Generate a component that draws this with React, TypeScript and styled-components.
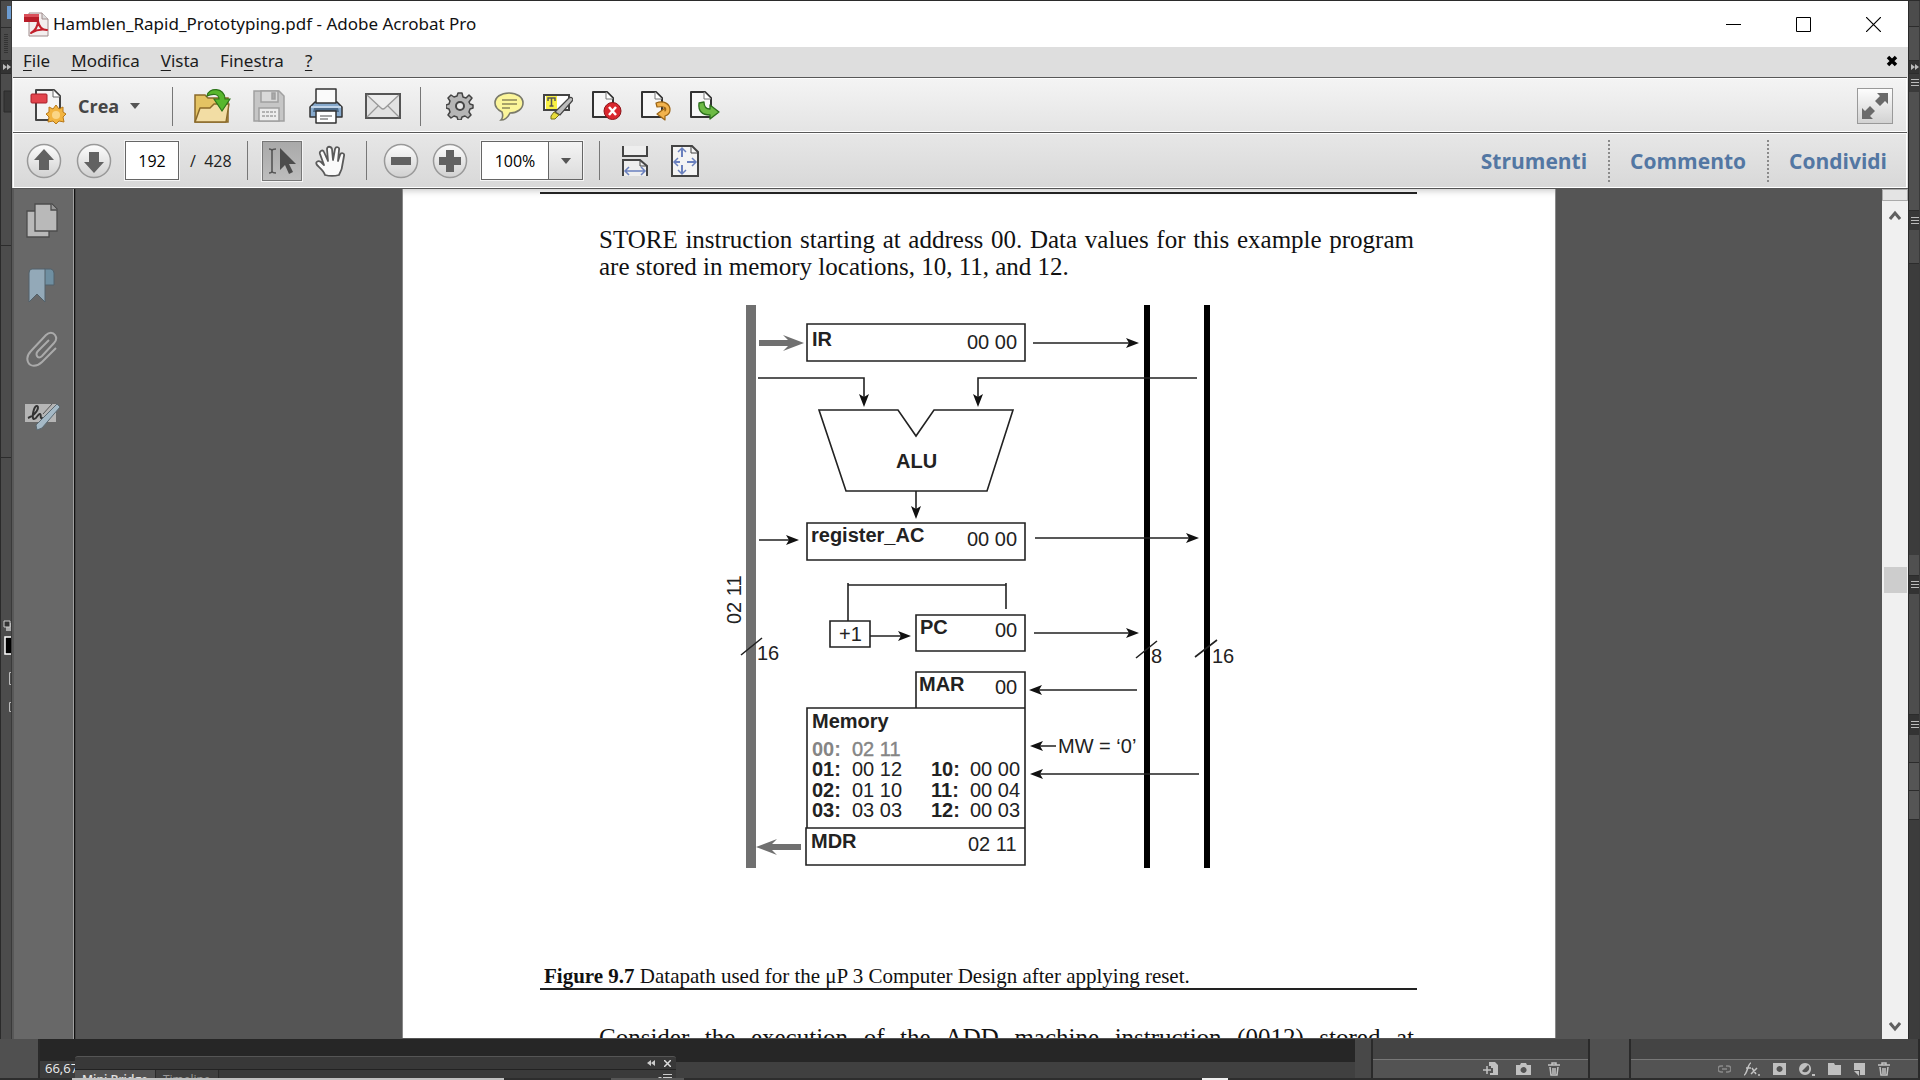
import React from "react";
import styled, { createGlobalStyle, css } from "styled-components";

const uiFont = `"Open Sans", "Noto Sans", sans-serif`;
const menuFont = `"Noto Sans", "Open Sans", sans-serif`;

const GlobalStyle = createGlobalStyle`
  * { box-sizing: border-box; }
  body { margin: 0; overflow: hidden; background: #434343; font-family: ${uiFont}; }
  button, input { font: inherit; color: inherit; }
  svg { display: block; flex: none; }
`;

/* ---------- shell ---------- */

const Desktop = styled.div`
  height: 100vh;
  display: flex;
  flex-direction: column;
  background: #3f3f3f;
`;

const Stage = styled.div`
  flex: 1;
  min-height: 0;
  display: flex;
  padding-top: 1px;
  background: #2b2b2b;
`;

const AppWindow = styled.main`
  flex: 1;
  min-width: 0;
  display: flex;
  flex-direction: column;
  background: #dedede;
`;

const Bar = styled.div`
  display: flex;
  align-items: center;
  flex: none;
`;

const TitleBar = styled(Bar)`
  height: 46px;
  padding-left: 12px;
  background: #fff;
`;

const Title = styled.h1`
  flex: 1;
  margin: 0 0 0 4px;
  font-family: ${menuFont};
  font-size: 17px;
  line-height: 24px;
  font-weight: 400;
  color: #111;
`;

const CaptionButton = styled.button`
  width: 70px;
  height: 46px;
  display: grid;
  place-items: center;
  padding: 0;
  border: 0;
  background: none;
`;

const MenuBar = styled(Bar)`
  height: 30px;
  padding: 0 8px 3px 0;
  justify-content: space-between;
  background: #dedede;
`;

const MenuList = styled.nav`
  display: flex;
`;

const MenuItem = styled.button`
  padding: 0 10px 0 11px;
  border: 0;
  background: none;
  font-family: ${menuFont};
  font-size: 17px;
  line-height: 26px;
  color: #1c1c1c;
  u { text-underline-offset: 3px; }
`;

const CloseDoc = styled.button`
  padding: 0;
  width: 16px;
  height: 16px;
  border: 0;
  background: none;
`;

const Toolbar = styled(Bar)<{ $lower?: boolean }>`
  height: ${(p) => (p.$lower ? 56 : 55)}px;
  margin: 0 1px;
  padding-top: ${(p) => (p.$lower ? 0 : 2)}px;
  border-top: 1px solid #585858;
  box-shadow: inset 0 1px 0 #fff, inset 1px 0 0 #fff, inset -1px 0 0 #fff, inset 0 -1px 0 #fff;
  background: ${(p) => (p.$lower ? "linear-gradient(#e7e7e7, #d8d8d8)" : "linear-gradient(#f4f4f4, #e4e4e4)")};
`;

const Spacer = styled.div`
  flex: 1;
`;

const Divider = styled.span<{ $before: number; $after: number }>`
  width: 1px;
  height: 39px;
  margin: 0 ${(p) => p.$after}px 0 ${(p) => p.$before}px;
  background: #777;
`;

const ToolButton = styled.button<{ $w: number; $pressed?: boolean }>`
  width: ${(p) => p.$w}px;
  height: 40px;
  padding: 0;
  display: grid;
  place-items: center;
  border: 0;
  background: none;
  ${(p) =>
    p.$pressed &&
    css`
      border: 1px solid #777;
      background: linear-gradient(#a9a9a9, #bdbdbd);
      box-shadow: 0 0 0 1px #f4f4f4;
    `}
`;

const CreateButton = styled.button`
  width: 159px;
  height: 46px;
  display: flex;
  align-items: center;
  padding: 0 0 0 17px;
  border: 0;
  background: none;
  font-size: 18px;
  font-weight: 700;
  color: #454545;
  span { margin: 0 10px 0 12px; }
`;

const PageInput = styled.input`
  width: 54px;
  height: 39px;
  margin-left: 11px;
  padding: 0;
  border: 1px solid #666;
  box-shadow: 0 0 0 1px #f4f4f4;
  background: #fff;
  text-align: center;
  font-size: 16px;
`;

const PageTotal = styled.label`
  width: 68px;
  padding-left: 11px;
  font-size: 16px;
  white-space: pre;
  color: #222;
`;

const ZoomBox = styled.div`
  display: flex;
  width: 102px;
  height: 39px;
  margin-left: 7px;
  border: 1px solid #666;
  box-shadow: 0 0 0 1px #f4f4f4;
  background: #fff;
`;

const ZoomInput = styled.input`
  flex: 1;
  min-width: 0;
  padding: 0;
  border: 0;
  background: none;
  text-align: center;
  font-size: 16px;
`;

const ZoomDrop = styled.button`
  width: 34px;
  display: grid;
  place-items: center;
  padding: 0;
  border: 0;
  border-left: 1px solid #666;
  background: linear-gradient(#f4f4f4, #dcdcdc);
`;

const PaneLink = styled.a`
  height: 42px;
  padding: 0 21px 0 20px;
  display: flex;
  align-items: center;
  border-left: 2px dotted #8a8a8a;
  font-size: 21px;
  font-weight: 700;
  color: #5377a3;
  text-decoration: none;
  &:first-of-type { border-left: 0; }
  &:last-of-type { padding-right: 20px; }
`;

const FullButton = styled.button`
  width: 36px;
  height: 36px;
  margin-right: 14px;
  padding: 0;
  display: grid;
  place-items: center;
  border: 1px solid #999;
  background: linear-gradient(#fdfdfd, #d2d2d2);
`;

/* ---------- workspace ---------- */

const Workspace = styled.div`
  flex: 1;
  min-height: 0;
  display: flex;
  border-top: 1px solid #555;
  background: #555;
`;

const NavPanel = styled.aside`
  width: 63px;
  display: flex;
  flex-direction: column;
  align-items: center;
  gap: 25px;
  padding: 12px 4px 0 0;
  background: #686868;
  border-left: 2px solid #585858;
  border-right: 1px solid #111;
  box-shadow: inset -1px 0 0 #a0a0a0;
`;

const Canvas = styled.section`
  flex: 1;
  min-width: 0;
  display: flex;
  justify-content: center;
  overflow: hidden;
  padding-bottom: 1px;
  border-left: 1px solid #444;
`;

const Page = styled.article`
  width: 1154px;
  flex: none;
  padding: 3px 138px 0 137px;
  overflow: hidden;
  background: #fff;
  border: solid #888;
  border-width: 0 1px;
  box-shadow: inset 0 8px 6px -6px #ccc;
  color: #111;
  font-family: "Liberation Serif", serif;
`;

const Rule = styled.hr`
  height: 2px;
  margin: 0;
  border: 0;
  background: #222;
`;

const Paragraph = styled.p<{ $top: number }>`
  margin: ${(p) => p.$top}px 3px 0 59px;
  font-size: 25px;
  line-height: 27px;
`;

const Line = styled.span<{ $full?: boolean }>`
  display: block;
  white-space: nowrap;
  ${(p) => p.$full && "text-align: justify; text-align-last: justify;"}
`;

const Figure = styled.figure`
  margin: 24px 0 0;
  svg { margin-left: 180px; }
`;

const Caption = styled.figcaption`
  margin: 93px 0 0 4px;
  font-size: 21px;
  line-height: 24px;
`;

const ScrollTrack = styled.div`
  width: 26px;
  display: flex;
  flex-direction: column;
  align-items: center;
  background: #f0f0f0;
`;

const SplitHandle = styled.div`
  width: 26px;
  height: 12px;
  border: 1px solid #aaa;
  background: #e4e4e4;
`;

const ScrollButton = styled.button`
  width: 24px;
  height: 26px;
  display: grid;
  place-items: center;
  padding: 2px 0 0;
  border: 0;
  background: none;
`;

const Gap = styled.div<{ $grow: number }>`
  flex: ${(p) => p.$grow};
`;

const Thumb = styled.div`
  width: 23px;
  height: 26px;
  background: #cdcdcd;
`;

/* ---------- editor behind the window ---------- */

const SideStrip = styled.div`
  width: 12px;
  flex: none;
  display: flex;
  flex-direction: column;
  overflow: hidden;
  background: #4c4c4c;
  border-left: 1px solid #2a2a2a;
  border-right: 1px solid #3a3a3a;
`;

const Block = styled.div<{ $h?: number; $bg?: string; $edge?: boolean }>`
  flex: ${(p) => (p.$h ? `none` : `1`)};
  height: ${(p) => (p.$h ? `${p.$h}px` : "auto")};
  display: flex;
  align-items: center;
  justify-content: flex-end;
  background: ${(p) => p.$bg ?? "transparent"};
  ${(p) => p.$edge && "border-bottom: 1px solid #2c2c2c;"}
`;

const BottomStrip = styled.footer`
  height: 41px;
  flex: none;
  display: flex;
  flex-direction: column;
  background: #3f3f3f;
`;

const Docks = styled.div`
  flex: 1;
  min-height: 0;
  display: flex;
`;

const Dock = styled.div<{ $w?: number; $bg: string }>`
  ${(p) => (p.$w ? `width: ${p.$w}px; flex: none;` : "flex: 1;")}
  background: ${(p) => p.$bg};
  border-right: 2px solid #2a2a2a;
`;

const ZoomStatus = styled.div`
  width: 35px;
  flex: none;
  overflow: hidden;
  padding: 20px 0 0 5px;
  background: linear-gradient(#262626 22px, #3c3c3c 22px);
  font-size: 13px;
  line-height: 19px;
  color: #eee;
`;

const MiniPanel = styled.div`
  width: 601px;
  flex: none;
  padding-top: 17px;
  background: #262626;
`;

const MiniHead = styled.div`
  height: 13px;
  display: flex;
  align-items: center;
  justify-content: flex-end;
  padding-right: 5px;
  gap: 9px;
  border-top: 1px solid #555;
  border-radius: 3px 3px 0 0;
  background: #383838;
`;

const MiniTabs = styled.div`
  height: 9px;
  display: flex;
  overflow: hidden;
  border-top: 1px solid #222;
  background: #3a3a3a;
`;

const MiniTab = styled.button<{ $on?: boolean }>`
  height: 18px;
  padding: 1px 7px 0;
  border: 0;
  border-right: 1px solid #2a2a2a;
  background: ${(p) => (p.$on ? "#535353" : "#404040")};
  color: ${(p) => (p.$on ? "#e0e0e0" : "#999")};
  font-size: 12px;
  line-height: 14px;
  font-weight: ${(p) => (p.$on ? 600 : 400)};
`;

const Stub = styled.div`
  flex: 1;
  background: linear-gradient(#262626 23px, #404040 23px);
`;

const IconDock = styled.div<{ $w: number; $gap: number }>`
  width: ${(p) => p.$w}px;
  flex: none;
  display: flex;
  align-items: flex-end;
  justify-content: flex-end;
  gap: ${(p) => p.$gap}px;
  padding: 0 28px 2px 0;
  border-right: 2px solid #2a2a2a;
  background: linear-gradient(#444 20px, #777 20px, #777 21px, #535353 21px);
`;

const Taskbar = styled.div`
  height: 2px;
  display: flex;
  background: #2d2d2d;
`;

const TaskItem = styled.span<{ $w: number; $bg: string; $before: number }>`
  width: ${(p) => p.$w}px;
  margin-left: ${(p) => p.$before}px;
  background: ${(p) => p.$bg};
`;

/* ---------- icons ---------- */

const PdfIcon = () => (
  <svg width="25" height="25" viewBox="0 0 25 25">
    <path d="M5 1h13l6 6v17H5z" fill="#f3eeee" stroke="#a08c8c" />
    <path d="M18 1v6h6" fill="#ddd" stroke="#a08c8c" />
    <path d="M7 21c4-2 7-7 7-12 1 6 4 9 9 9-5-1-11 0-16 3z" fill="none" stroke="#c2202c" strokeWidth="2" strokeLinejoin="round" />
    <path d="M0 2h15v8H0z" fill="#b81c28" />
    <path d="M0 2h15v3H0z" fill="#d9505a" />
  </svg>
);

const CreateIcon = () => (
  <svg width="36" height="36" viewBox="0 0 36 36">
    <path d="M6 2h18l6 6v24H6z" fill="#f4f4f4" stroke="#444" strokeWidth="2" strokeLinejoin="round" />
    <path d="M23 2v7h7" fill="#fff" stroke="#666" />
    <rect x="1" y="6" width="16" height="9" rx="1" fill="#e2444c" stroke="#a81f29" />
    <path d="M26 17l3 4 4-2v5l3 2-3 3 1 5-5-1-3 3-3-3-5 1 1-5-3-3 3-2v-5l4 2z" fill="#f2b440" stroke="#b87818" />
    <circle cx="26" cy="27" r="4" fill="#fbd685" />
  </svg>
);

const Caret = () => (
  <svg width="12" height="8" viewBox="0 0 12 8"><path d="M1 1h10L6 7z" fill="#555" /></svg>
);

const OpenIcon = () => (
  <svg width="38" height="36" viewBox="0 0 38 36">
    <path d="M2 34V7h10l3 3h20v24z" fill="#e4c363" stroke="#8a6a2a" strokeWidth="1.5" />
    <path d="M2 34l5-14h10l4-4h15l-3 18z" fill="#f2dda4" stroke="#8a6a2a" strokeWidth="1.5" strokeLinejoin="round" />
    <path d="M14 8C15-1 32-1 32 11h5l-8 12-8-12h5c0-5-6-6-12-3z" fill="#58b72d" stroke="#2d741a" strokeWidth="1.2" />
  </svg>
);

const SaveIcon = () => (
  <svg width="32" height="32" viewBox="0 0 32 32" fill="#c6c6c6" stroke="#a0a0a0" strokeWidth="1.5">
    <path d="M1 1h25l5 5v25H1z" />
    <path d="M8 1h17v11H8z" fill="#d9d9d9" />
    <path d="M19 3h3v6h-3z" fill="#aaa" />
    <path d="M6 18h20v13H6z" fill="#ececec" />
    <path d="M9 22h14M9 26h14" strokeDasharray="3 1" />
  </svg>
);

const PrintIcon = () => (
  <svg width="34" height="36" viewBox="0 0 34 36" stroke="#333" strokeWidth="1.5" strokeLinejoin="round">
    <path d="M1 19l5-5h22l5 5v10H1z" fill="#86a9cc" />
    <path d="M2 19h30" stroke="#d5e5f4" />
    <path d="M7 1h20v14H7z" fill="#fafafa" />
    <path d="M5 20h24l1 4H4z" fill="#4c6a88" stroke="none" />
    <path d="M7 23h20v12H7z" fill="#fff" />
    <path d="M11 28h12M11 31h8" stroke="#888" />
  </svg>
);

const MailIcon = () => (
  <svg width="36" height="26" viewBox="0 0 36 26" fill="none" stroke="#999" strokeWidth="1.3">
    <rect x="1" y="1" width="34" height="24" fill="#e2e2e2" stroke="#555" strokeWidth="2" />
    <path d="M2 24l12-12M34 24L22 12" />
    <path d="M2 2l14 13q2 2 4 0L34 2" fill="#ededed" />
  </svg>
);

const GearIcon = () => (
  <svg width="28" height="28" viewBox="0 0 28 28">
    <g fill="#b5b5b5" stroke="#444" strokeWidth="1.5">
      <path d="M12 1h4l1 4 3 1 3-3 3 3-3 4 1 2 3 1v3l-3 1-1 3 2 3-3 3-3-2-3 1-1 3h-3l-1-3-3-1-3 2-3-3 2-3-1-3-3-1v-3l3-1 1-3-2-3 3-3 3 2 3-1z" strokeLinejoin="round" />
      <circle cx="14" cy="14" r="4" fill="#e8e8e8" strokeWidth="2" />
    </g>
  </svg>
);

const CommentIcon = () => (
  <svg width="30" height="29" viewBox="0 0 30 29">
    <path d="M15 1c8 0 14 4 14 10s-6 10-13 10c-2 4-5 7-9 7 2-2 2-5 1-8-4-2-7-5-7-9C1 5 7 1 15 1z" fill="#fbf59a" stroke="#7a7a6a" strokeWidth="1.6" />
    <path d="M8 8h15M8 12h15M8 16h8" stroke="#8d875a" strokeWidth="1.5" />
  </svg>
);

const HighlightIcon = () => (
  <svg width="30" height="28" viewBox="0 0 30 28">
    <path d="M1 3h25v15H1z" fill="#fff" stroke="#444" strokeWidth="2" />
    <path d="M3 4h11v13H3z" fill="#f8f046" />
    <path d="M5 9V6h7v3M8.500 6v8M6.500 14h4" fill="none" stroke="#555" strokeWidth="1.5" />
    <path d="M26 6q3-2 4 2L17 23l-5-3L24 8z" fill="#bdbdbd" stroke="#444" strokeWidth="1.2" />
    <path d="M11 20l5 3-4 4H8v-3z" fill="#e8dc3c" stroke="#777019" />
  </svg>
);

const Sheet = () => (
  <>
    <path d="M1 1h14l6 6v19H1z" fill="#f7f7f7" stroke="#333" strokeWidth="2" strokeLinejoin="round" />
    <path d="M14 1v7h7" fill="#fff" stroke="#777" />
  </>
);

const DeletePageIcon = () => (
  <svg width="30" height="30" viewBox="0 0 30 30">
    <Sheet />
    <circle cx="20.500" cy="20" r="8.500" fill="#d9272e" stroke="#8d1318" />
    <path d="M17 16l7 8M24 16l-7 8" stroke="#fff" strokeWidth="2.500" />
  </svg>
);

const RotatePageIcon = () => (
  <svg width="30" height="30" viewBox="0 0 30 30">
    <Sheet />
    <path d="M15 12c8-3 14 1 14 7 0 4-2 5-5 6v4l-8-6 8-6v3c2-3 0-5-8-4z" fill="#f2b34d" stroke="#9b6414" strokeWidth="1.2" strokeLinejoin="round" />
  </svg>
);

const ExportPageIcon = () => (
  <svg width="30" height="30" viewBox="0 0 30 30">
    <Sheet />
    <path d="M9 12c-1 8 3 12 11 12v4l9-7-9-7v4c-4 0-6-2-6-7z" fill="#6dbb45" stroke="#2c6f1c" strokeWidth="1.3" strokeLinejoin="round" />
  </svg>
);

const RoundIcon = ({ d }: { d: string }) => (
  <svg width="36" height="36" viewBox="0 0 36 36">
    <defs>
      <linearGradient id="knob" x1="0" y1="0" x2="0" y2="1">
        <stop offset="0" stopColor="#fdfdfd" />
        <stop offset="1" stopColor="#d0d0d0" />
      </linearGradient>
    </defs>
    <circle cx="18" cy="18" r="16.500" fill="url(#knob)" stroke="#999" strokeWidth="1.5" />
    <path d={d} fill="#626262" />
  </svg>
);

const SelectIcon = () => (
  <svg width="28" height="28" viewBox="0 0 28 28">
    <path d="M1 2q3 0 3 2v20q0 2-3 2M8 2Q4 2 4 4v20q0 2 4 2" fill="none" stroke="#555" strokeWidth="1.6" />
    <path d="M12 1v22l5-5 4 9 4-2-4-8h7z" fill="#4c4c4c" />
  </svg>
);

const HandIcon = () => (
  <svg width="31" height="32" viewBox="0 0 31 32">
    <path d="M10 30c-1-4-5-7-8-10-2-3 1-5 4-3l3 3L5 9c-1-3 3-5 4-2l4 9-1-12c0-3 4-3 5 0l1 11 2-11c1-3 5-2 4 1l-1 11 2-6c1-3 5-2 4 1l-2 11c0 3-2 5-3 8-4 1-10 1-14 0z" fill="#fafafa" stroke="#5a5a5a" strokeWidth="1.800" strokeLinejoin="round" />
  </svg>
);

const FitWidthIcon = () => (
  <svg width="26" height="30" viewBox="0 0 26 30" fill="none" stroke="#444" strokeWidth="2">
    <path d="M1 0v10h24V0" fill="#eee" />
    <path d="M1 30V14h17l7 6v10" fill="#eee" />
    <path d="M18 14v6h7" strokeWidth="1" />
    <path d="M3 25h20M7 21l-4 4 4 4M19 21l4 4-4 4" stroke="#6a80be" strokeWidth="1.500" />
  </svg>
);

const FitPageIcon = () => (
  <svg width="28" height="32" viewBox="0 0 28 32" fill="none" stroke="#444" strokeWidth="2">
    <path d="M1 1h20l6 6v24H1z" fill="#f4f4f4" />
    <path d="M20 1v7h7" strokeWidth="1" />
    <g stroke="#6a80be">
      <path d="M11 4v8M11 20v8M3 17h6M16 17h9" />
      <path d="M7 7l4-4 4 4M7 25l4 4 4-4M7 13l-4 4 4 4M21 13l4 4-4 4" strokeWidth="1.500" />
    </g>
  </svg>
);

const FullIcon = () => (
  <svg width="30" height="30" viewBox="0 0 30 30" fill="#6a6a6a">
    <path d="M17 2h11v11l-3-3-5 5-5-5 5-5zM13 28H2V17l3 3 5-5 5 5-5 5z" />
  </svg>
);

const NavPages = () => (
  <svg width="34" height="40" viewBox="0 0 34 40" fill="#b9b9b9" stroke="#4c4c4c" strokeWidth="1.300">
    <path d="M2 10h22v26H2z" />
    <path d="M10 3h17l5 5v22H10z" />
    <path d="M26 3v6h6" fill="#999" />
  </svg>
);
const NavBookmark = () => (
  <svg width="34" height="40" viewBox="0 0 34 40" stroke="#52616a" strokeWidth="1">
    <path d="M19 3h7q3 1 3 4v12H19z" fill="#6f8fa1" />
    <path d="M4 7q0-4 3-4h13v33l-8-8-8 8z" fill="#93a9b8" />
  </svg>
);
const NavClip = () => (
  <svg width="34" height="40" viewBox="0 2 34 40" fill="none" stroke="#aaa" strokeWidth="2">
    <path d="M31 19L17 33c-5 5-12 5-14 0s0-8 3-11L21 6c3-3 7-3 9 0s1 6-1 8L17 27c-2 2-4 2-5 0s0-4 1-5L24 11" />
  </svg>
);
const NavSign = () => (
  <svg width="36" height="40" viewBox="0 -2 36 40">
    <path d="M1 6h31v18H1z" fill="#b5b5b5" />
    <path d="M4 20c8-3 12-11 9-12S7 21 10 21s4-6 6-5-1 5 3 4" fill="none" stroke="#333" strokeWidth="2" />
    <path d="M33 6l3 3-18 21-5 2-1-5z" fill="#a5b9c6" stroke="#5b6a73" />
    <path d="M28 6l-9 10" stroke="#555" />
  </svg>
);

const Chevron = ({ down }: { down?: boolean }) => (
  <svg width="12" height="10" viewBox="0 0 12 10" fill="none" stroke="#606060" strokeWidth="3">
    <path d={down ? "M1 1l5 6 5-6" : "M1 9l5-6 5 6"} />
  </svg>
);

const Glyph = ({ d, solid, w = 14, dim }: { d?: string; solid?: string; w?: number; dim?: boolean }) => (
  <svg width={w} height="14" viewBox={`0 0 ${w} 14`}>
    {solid && <path d={solid} fill="#c0c0c0" fillRule="evenodd" />}
    {d && <path d={d} fill="none" stroke={dim ? "#8a8a8a" : "#c4c4c4"} strokeWidth="1.500" />}
  </svg>
);

const Lines = () => (
  <svg width="8" height="10" viewBox="0 0 8 10" stroke="#bbb"><path d="M0 1.500h8M0 4.500h8M0 7.500h8" /></svg>
);
const Skip = () => (
  <svg width="8" height="6" viewBox="0 0 8 6" fill="#bbb"><path d="M0 0l4 3-4 3zM4 0l4 3-4 3z" /></svg>
);
const trash = "M0 3h12M4 3V1h4v2M2 5l1 8h6l1-8M5 6v6M7 6v6";

/* ---------- datapath drawing ---------- */

const Diagram = styled.svg`
  font-family: "Liberation Sans", Arial, sans-serif;
  font-size: 20px;
  fill: #222;
`;
const Shape = styled.path`
  fill: none;
  stroke: #222;
  stroke-width: 1.6px;
`;
const Bus = styled.path<{ $c: string; $w: number }>`
  stroke: ${(p) => p.$c};
  stroke-width: ${(p) => p.$w}px;
`;
const Name = styled.text<{ $dim?: boolean }>`
  font-weight: 700;
  ${(p) => p.$dim && "fill: #858585;"}
`;
const Value = styled.text<{ $dim?: boolean }>`
  ${(p) => p.$dim && "fill: #858585; stroke: #858585; stroke-width: 0.4px;"}
`;

const Head = ({ x, y, turn = 0 }: { x: number; y: number; turn?: number }) => (
  <path d="M0 0l-13-5 3 5-3 5z" fill="#111" transform={`translate(${x} ${y}) rotate(${turn})`} />
);

const memory: [string, string, number, number][] = [
  ["01:", "00 12", 812, 776],
  ["02:", "01 10", 812, 797],
  ["03:", "03 03", 812, 817],
  ["10:", "00 00", 931, 776],
  ["11:", "00 04", 931, 797],
  ["12:", "00 03", 931, 817],
];

const Datapath = () => (
  <Diagram width="520" height="567" viewBox="720 304 520 567" role="img" aria-label="Datapath">
    <Bus $c="#707070" $w={10} d="M751 305V868" />
    <Bus $c="#000" $w={6} d="M1147 305V868M1207 305V868" />

    <Shape d="M807 324h218v37H807zM807 523h218v37H807zM916 615h109v36H916zM916 708v-36h109v36M807 708h218v120H807zM806 828h219v37H806zM830 621h40v26h-40z" />
    <Shape d="M819 410h79l18 26 18-26h79l-26 81H846z" />
    <Shape d="M1033 343h100M758 378h106v20M1197 378H978v20M916 491v18M759 540h32M1035 538h156M848 621v-38M848 585h158M1006 583v26M870 636h32M1034 633h98M1137 690h-100M1056 746h-18M1199 774h-160" />
    <Shape d="M741 655l21-17M1136 658l21-17M1195 657l22-17" />

    <Head x={1139} y={343} />
    <Head x={864} y={407} turn={90} />
    <Head x={978} y={407} turn={90} />
    <Head x={916} y={519} turn={90} />
    <Head x={799} y={540} />
    <Head x={1199} y={538} />
    <Head x={911} y={636} />
    <Head x={1139} y={633} />
    <Head x={1029} y={690} turn={180} />
    <Head x={1030} y={746} turn={180} />
    <Head x={1030} y={774} turn={180} />
    <path d="M759 340h29l-5-5 21 8-21 8 5-5h-29zM801 844h-29l5-5-21 8 21 8-5-5h29z" fill="#707070" />

    <Name x="812" y="346">IR</Name>
    <Value x="967" y="349">00 00</Value>
    <Name x="896" y="468">ALU</Name>
    <Name x="811" y="542">register_AC</Name>
    <Value x="967" y="546">00 00</Value>
    <Value x="839" y="641">+1</Value>
    <Name x="920" y="634">PC</Name>
    <Value x="995" y="637">00</Value>
    <Name x="919" y="691">MAR</Name>
    <Value x="995" y="694">00</Value>
    <Name x="812" y="728">Memory</Name>
    <Name $dim x="812" y="756">00:</Name>
    <Value $dim x="852" y="756">02 11</Value>
    {memory.map(([k, v, x, y]) => (
      <React.Fragment key={k}>
        <Name x={x} y={y}>{k}</Name>
        <Value x={x + (x > 900 ? 39 : 40)} y={y}>{v}</Value>
      </React.Fragment>
    ))}
    <Name x="811" y="848">MDR</Name>
    <Value x="968" y="851">02 11</Value>
    <Value x="1058" y="753">MW = ‘0’</Value>
    <Value x="757" y="660">16</Value>
    <Value x="1151" y="663">8</Value>
    <Value x="1212" y="663">16</Value>
    <Value transform="translate(741 624) rotate(-90)">02 11</Value>
  </Diagram>
);

/* ---------- page ---------- */

const menus: [string, string, string][] = [
  ["", "F", "ile"],
  ["", "M", "odifica"],
  ["", "V", "ista"],
  ["Fin", "e", "stra"],
  ["", "?", ""],
];

export default function App() {
  return (
    <Desktop>
      <GlobalStyle />
      <Stage>
        <SideStrip>
          <Block $h={5} />
          <Block $h={13}><svg width="4" height="13"><path d="M0 0h4v13H0z" fill="#6b9bd0" /></svg></Block>
          <Block $h={9} $edge />
          <Block $h={33} $edge><svg width="7" height="20" stroke="#333" strokeWidth="4" strokeDasharray="1 1"><path d="M2 0v20" /></svg></Block>
          <Block $h={13} $bg="#333" $edge><Skip /></Block>
          <Block $h={16} />
          <Block $h={23}><svg width="8" height="23"><path d="M9 1H1v21h8" fill="#383838" stroke="#2a2a2a" /></svg></Block>
          <Block $h={133} $edge />
          <Block $h={212} $edge />
          <Block $h={161} />
          <Block $h={12}><svg width="8" height="11"><path d="M3 3h6v8H3z" fill="#aaa" /><path d="M1 1h6v6H1z" fill="#333" stroke="#ccc" /></svg></Block>
          <Block $h={5} />
          <Block $h={19}><svg width="7" height="19"><path d="M8 1H1v17h7" fill="#000" stroke="#fff" strokeWidth="1.500" /></svg></Block>
          <Block $h={17} />
          <Block $h={13}><svg width="2" height="13"><path d="M3 .5H.5v12H3" fill="none" stroke="#bbb" /></svg></Block>
          <Block $h={17} />
          <Block $h={10}><svg width="2" height="10"><path d="M3 .5H.5v9H3" fill="none" stroke="#bbb" /></svg></Block>
          <Block />
        </SideStrip>

        <AppWindow>
          <TitleBar>
            <PdfIcon />
            <Title>Hamblen_Rapid_Prototyping.pdf - Adobe Acrobat Pro</Title>
            <CaptionButton aria-label="Minimize"><svg width="15" height="15"><path d="M0 7.500h15" stroke="#000" /></svg></CaptionButton>
            <CaptionButton aria-label="Maximize"><svg width="15" height="15"><path d="M.5.5h14v14H.5z" fill="none" stroke="#000" /></svg></CaptionButton>
            <CaptionButton aria-label="Close"><svg width="15" height="15"><path d="M0 0l15 15M15 0L0 15" stroke="#000" strokeWidth="1.200" /></svg></CaptionButton>
          </TitleBar>

          <MenuBar>
            <MenuList>
              {menus.map(([a, u, b]) => (
                <MenuItem key={a + u + b}>{a}<u>{u}</u>{b}</MenuItem>
              ))}
            </MenuList>
            <CloseDoc aria-label="Close document">
              <svg width="16" height="16" viewBox="0 0 16 16"><path d="M4 4l8 8M12 4l-8 8" stroke="#000" strokeWidth="3.500" /></svg>
            </CloseDoc>
          </MenuBar>

          <Toolbar>
            <CreateButton><CreateIcon /><span>Crea</span><Caret /></CreateButton>
            <Divider $before={0} $after={10} />
            <ToolButton $w={57} aria-label="Open"><OpenIcon /></ToolButton>
            <ToolButton $w={57} aria-label="Save"><SaveIcon /></ToolButton>
            <ToolButton $w={57} aria-label="Print"><PrintIcon /></ToolButton>
            <ToolButton $w={57} aria-label="Mail"><MailIcon /></ToolButton>
            <Divider $before={9} $after={14} />
            <ToolButton $w={49} aria-label="Settings"><GearIcon /></ToolButton>
            <ToolButton $w={49} aria-label="Comment"><CommentIcon /></ToolButton>
            <ToolButton $w={49} aria-label="Highlight"><HighlightIcon /></ToolButton>
            <ToolButton $w={49} aria-label="Delete page"><DeletePageIcon /></ToolButton>
            <ToolButton $w={49} aria-label="Rotate page"><RotatePageIcon /></ToolButton>
            <ToolButton $w={49} aria-label="Export page"><ExportPageIcon /></ToolButton>
            <Spacer />
            <FullButton aria-label="Full screen"><FullIcon /></FullButton>
          </Toolbar>

          <Toolbar $lower>
            <ToolButton $w={61} aria-label="Previous page"><RoundIcon d="M18 6l10 11h-5v10H13V17H8z" /></ToolButton>
            <ToolButton $w={40} aria-label="Next page"><RoundIcon d="M18 30L8 19h5V9h10v10h5z" /></ToolButton>
            <PageInput id="page" defaultValue="192" />
            <PageTotal htmlFor="page">/  428</PageTotal>
            <Divider $before={0} $after={14} />
            <ToolButton $w={40} $pressed aria-label="Select"><SelectIcon /></ToolButton>
            <ToolButton $w={57} aria-label="Hand"><HandIcon /></ToolButton>
            <Divider $before={7} $after={9} />
            <ToolButton $w={49} aria-label="Zoom out"><RoundIcon d="M8 14h20v8H8z" /></ToolButton>
            <ToolButton $w={49} aria-label="Zoom in"><RoundIcon d="M14 7h8v7h7v8h-7v7h-8v-7H7v-8h7z" /></ToolButton>
            <ZoomBox>
              <ZoomInput aria-label="Zoom" defaultValue="100%" />
              <ZoomDrop aria-label="Zoom levels"><Caret /></ZoomDrop>
            </ZoomBox>
            <Divider $before={16} $after={10} />
            <ToolButton $w={50} aria-label="Fit width"><FitWidthIcon /></ToolButton>
            <ToolButton $w={50} aria-label="Fit page"><FitPageIcon /></ToolButton>
            <Spacer />
            <PaneLink href="#strumenti">Strumenti</PaneLink>
            <PaneLink href="#commento">Commento</PaneLink>
            <PaneLink href="#condividi">Condividi</PaneLink>
          </Toolbar>

          <Workspace>
            <NavPanel>
              <NavPages />
              <NavBookmark />
              <NavClip />
              <NavSign />
            </NavPanel>
            <Canvas>
              <Page>
                <Rule />
                <Paragraph $top={32}>
                  <Line $full>STORE instruction starting at address 00. Data values for this example program</Line>
                  <Line>are stored in memory locations, 10, 11, and 12.</Line>
                </Paragraph>
                <Figure>
                  <Datapath />
                  <Caption><b>Figure 9.7</b> Datapath used for the μP 3 Computer Design after applying reset.</Caption>
                </Figure>
                <Rule />
                <Paragraph $top={34}>
                  <Line $full>Consider the execution of the ADD machine instruction (0012) stored at</Line>
                </Paragraph>
              </Page>
            </Canvas>
            <ScrollTrack>
              <SplitHandle />
              <ScrollButton aria-label="Scroll up"><Chevron /></ScrollButton>
              <Gap $grow={341} />
              <Thumb />
              <Gap $grow={421} />
              <ScrollButton aria-label="Scroll down"><Chevron down /></ScrollButton>
            </ScrollTrack>
          </Workspace>
        </AppWindow>

        <SideStrip>
          <Block $h={26} $edge />
          <Block $h={34} $bg="#505050" $edge />
          <Block $h={13} $bg="#333" $edge><Skip /></Block>
          <Block $h={18} $bg="#3a3a3a"><Lines /></Block>
          <Block $h={119} $bg="#505050" $edge />
          <Block $h={19} $bg="#383838"><Lines /></Block>
          <Block $h={34} $bg="#4d4d4d" $edge />
          <Block $h={291} $bg="#3c3c3c" />
          <Block $h={21} $bg="#505050" $edge />
          <Block $h={18} $bg="#333"><Lines /></Block>
          <Block $h={121} $bg="#4d4d4d" $edge />
          <Block $h={20} $bg="#333"><Lines /></Block>
          <Block $h={28} $bg="#4d4d4d" $edge />
          <Block $h={28} $bg="#555" $edge />
          <Block $h={29} $bg="#555" $edge />
          <Block $bg="#3c3c3c" />
        </SideStrip>
      </Stage>

      <BottomStrip>
        <Docks>
          <Dock $w={40} $bg="#505050" />
          <ZoomStatus>66,67</ZoomStatus>
          <MiniPanel>
            <MiniHead>
              <svg width="8" height="6" viewBox="0 0 8 6" fill="#ccc"><path d="M4 0L0 3l4 3zM8 0L4 3l4 3z" /></svg>
              <svg width="7" height="7" viewBox="0 0 7 7" stroke="#ddd" strokeWidth="1.500"><path d="M0 0l7 7M7 0L0 7" /></svg>
            </MiniHead>
            <MiniTabs>
              <MiniTab $on>Mini Bridge</MiniTab>
              <MiniTab>Timeline</MiniTab>
              <Spacer />
              <svg width="19" height="10" viewBox="0 0 19 10" stroke="#ccc" fill="#ccc"><path d="M6 4.500h9M6 7.500h9" /><path d="M1 7h4l-2 2z" stroke="none" /></svg>
            </MiniTabs>
          </MiniPanel>
          <Stub />
          <Dock $w={18} $bg="#484848" />
          <IconDock $w={217} $gap={17}>
            <Glyph w={16} solid="M6 0h6l3 3v10H7v-2h3V6H8V4H6z" d="M0 8h8M4 4v8" />
            <Glyph w={15} solid="M0 3h4l1-2h5l1 2h4v10H0zM7.500 5a3 3 0 1 0 .1 0" />
            <Glyph w={12} d={trash} />
          </IconDock>
          <Dock $w={41} $bg="#505050" />
          <IconDock $w={289} $gap={13}>
            <Glyph w={13} dim d="M5 4H3a3 3 0 0 0 0 6h2M8 4h2a3 3 0 0 1 0 6H8M4 7h5" />
            <Glyph w={16} d="M0 13c3 0 4-12 7-12M2 6h5M8 6l4 6M13 6l-6 6M14 13h2" />
            <Glyph w={13} solid="M0 1h13v12H0zM6.500 4a3 3 0 1 0 .1 0" />
            <Glyph w={16} solid="M6 1a6 6 0 1 0 .1 0M3 9l6-6a4 4 0 0 1-6 6M13 12h3v2h-3z" />
            <Glyph w={13} solid="M0 1h6l1 2h6v10H0z" />
            <Glyph w={11} solid="M0 1h11v12H6V8H0zM0 9l5 5V9z" />
            <Glyph w={12} d={trash} />
          </IconDock>
        </Docks>
        <Taskbar>
          <TaskItem $before={72} $w={432} $bg="#c0c0c0" />
          <TaskItem $before={107} $w={73} $bg="#555" />
          <TaskItem $before={518} $w={26} $bg="#eee" />
        </Taskbar>
      </BottomStrip>
    </Desktop>
  );
}
